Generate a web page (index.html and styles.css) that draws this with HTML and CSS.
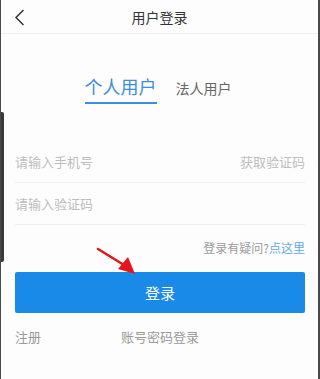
FILE: index.html
```html
<!DOCTYPE html>
<html lang="zh">
<head>
<meta charset="utf-8">
<link rel="stylesheet" href="styles.css">
</head>
<body>
<div class="page">
  <div class="side-bar"></div>
  <header class="header">
    <svg class="back" width="14" height="20" viewBox="0 0 14 20"><path d="M9.5 3 L2 10.5 L9.5 18" fill="none" stroke="#333" stroke-width="1.5"/></svg>
    <div class="title">用户登录</div>
    <div></div>
  </header>
  <nav class="tabs">
    <div class="tab active">个人用户</div>
    <div class="tab">法人用户</div>
  </nav>
  <form class="form">
    <div class="row"><span class="ph">请输入手机号</span><span class="ph">获取验证码</span></div>
    <div class="row"><span class="ph">请输入验证码</span></div>
    <div class="help">登录有疑问?<span class="link">点这里</span></div>
    <div class="btn">登录</div>
    <div class="bottom"><span>注册</span><span class="pwd">账号密码登录</span></div>
  </form>
  <svg class="arrow" width="320" height="379" viewBox="0 0 320 379">
    <line x1="98" y1="249" x2="124" y2="265" stroke="#e5151b" stroke-width="2.6" stroke-linecap="round"/>
    <polygon points="135,274 118,269 128,257" fill="#e5151b"/>
  </svg>
</div>
</body>
</html>
```
FILE: styles.css
```css
html, body {
  margin: 0;
  padding: 0;
  background: #fdfdfd;
}
body {
  font-family: "Noto Sans CJK SC", "Noto Sans", sans-serif;
}
.page {
  position: relative;
  width: 320px;
  height: 379px;
  box-sizing: border-box;
  border-left: 1px solid #4a4a4a;
  border-right: 2px solid #4a4a4a;
  background: #fdfdfd;
  overflow: hidden;
}
.side-bar {
  position: absolute;
  left: -1px;
  top: 112px;
  width: 4px;
  height: 150px;
  background: #3a3a3a;
  border-radius: 0 2px 2px 0;
}
.header {
  height: 33px;
  border-bottom: 1px solid #efefef;
  display: grid;
  grid-template-columns: 40px 1fr 40px;
  align-items: center;
}
.back {
  margin-left: 13px;
}
.title {
  text-align: center;
  font-size: 14px;
  color: #333;
  line-height: 20px;
}
.tabs {
  display: flex;
  justify-content: center;
  align-items: baseline;
  gap: 19px;
  margin-top: 40px;
  padding-right: 3px;
}
.tab {
  font-size: 14px;
  color: #666;
  line-height: 20px;
}
.tab.active {
  font-size: 18px;
  line-height: 24px;
  color: #3b8ee0;
  padding-bottom: 4px;
  border-bottom: 2px solid #3b8ee0;
}
.form {
  margin: 37px 13px 0 14px;
}
.row {
  height: 41px;
  border-bottom: 1px solid #f0f0f0;
  display: flex;
  justify-content: space-between;
  align-items: center;
}
.ph {
  font-size: 13px;
  color: #bdbdbd;
  line-height: 18px;
}
.help {
  margin-top: 15px;
  text-align: right;
  font-size: 12px;
  line-height: 16px;
  color: #9a9a9a;
}
.link {
  color: #62ace2;
}
.btn {
  margin-top: 16px;
  height: 41px;
  background: #1a8ae8;
  border-radius: 2px;
  color: #fff;
  font-size: 15px;
  display: flex;
  align-items: center;
  justify-content: center;
}
.bottom {
  margin-top: 15px;
  display: flex;
  gap: 80px;
  font-size: 13px;
  line-height: 18px;
  color: #9a9a9a;
}
.arrow {
  position: absolute;
  left: -1px;
  top: 0;
  pointer-events: none;
}
```
